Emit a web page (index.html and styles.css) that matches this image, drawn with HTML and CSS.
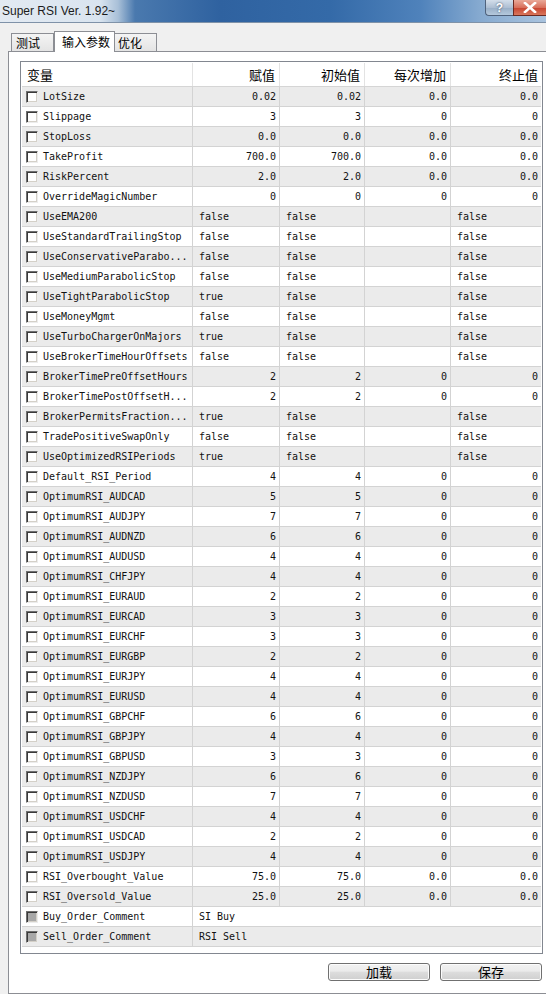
FILE: index.html
```html
<!DOCTYPE html>
<html>
<head>
<meta charset="utf-8">
<title>Super RSI Ver. 1.92~</title>
<link rel="stylesheet" href="styles.css">
</head>
<body>
<div class="titlebar">
  <div class="title">Super RSI Ver. 1.92~</div>
  <div class="ctrls">
    <div class="cbtn help">?</div>
    <div class="cbtn close"><svg width="14" height="11" viewBox="0 0 14 11"><path d="M2 1 L12 10 M12 1 L2 10" stroke="#fff" stroke-width="2.6" stroke-linecap="square"/></svg></div>
  </div>
</div>
<div class="client">
  <div class="tabs">
    <div class="tab t1">测试</div>
    <div class="tab t2 sel">输入参数</div>
    <div class="tab t3">优化</div>
  </div>
  <div class="page">
    <div class="list">
      <div class="hdr">
        <span class="hl">变量</span><span>赋值</span><span>初始值</span><span>每次增加</span><span class="last">终止值</span>
      </div>
      <div class="row alt"><span class="nm"><i class="cb"></i>LotSize</span><span class="n">0.02</span><span class="n">0.02</span><span class="n">0.0</span><span class="n">0.0</span></div>
      <div class="row"><span class="nm"><i class="cb"></i>Slippage</span><span class="n">3</span><span class="n">3</span><span class="n">0</span><span class="n">0</span></div>
      <div class="row alt"><span class="nm"><i class="cb"></i>StopLoss</span><span class="n">0.0</span><span class="n">0.0</span><span class="n">0.0</span><span class="n">0.0</span></div>
      <div class="row"><span class="nm"><i class="cb"></i>TakeProfit</span><span class="n">700.0</span><span class="n">700.0</span><span class="n">0.0</span><span class="n">0.0</span></div>
      <div class="row alt"><span class="nm"><i class="cb"></i>RiskPercent</span><span class="n">2.0</span><span class="n">2.0</span><span class="n">0.0</span><span class="n">0.0</span></div>
      <div class="row"><span class="nm"><i class="cb"></i>OverrideMagicNumber</span><span class="n">0</span><span class="n">0</span><span class="n">0</span><span class="n">0</span></div>
      <div class="row alt"><span class="nm"><i class="cb"></i>UseEMA200</span><span class="t">false</span><span class="t">false</span><span class="t"></span><span class="t">false</span></div>
      <div class="row"><span class="nm"><i class="cb"></i>UseStandardTrailingStop</span><span class="t">false</span><span class="t">false</span><span class="t"></span><span class="t">false</span></div>
      <div class="row alt"><span class="nm"><i class="cb"></i>UseConservativeParabo...</span><span class="t">false</span><span class="t">false</span><span class="t"></span><span class="t">false</span></div>
      <div class="row"><span class="nm"><i class="cb"></i>UseMediumParabolicStop</span><span class="t">false</span><span class="t">false</span><span class="t"></span><span class="t">false</span></div>
      <div class="row alt"><span class="nm"><i class="cb"></i>UseTightParabolicStop</span><span class="t">true</span><span class="t">false</span><span class="t"></span><span class="t">false</span></div>
      <div class="row"><span class="nm"><i class="cb"></i>UseMoneyMgmt</span><span class="t">false</span><span class="t">false</span><span class="t"></span><span class="t">false</span></div>
      <div class="row alt"><span class="nm"><i class="cb"></i>UseTurboChargerOnMajors</span><span class="t">true</span><span class="t">false</span><span class="t"></span><span class="t">false</span></div>
      <div class="row"><span class="nm"><i class="cb"></i>UseBrokerTimeHourOffsets</span><span class="t">false</span><span class="t">false</span><span class="t"></span><span class="t">false</span></div>
      <div class="row alt"><span class="nm"><i class="cb"></i>BrokerTimePreOffsetHours</span><span class="n">2</span><span class="n">2</span><span class="n">0</span><span class="n">0</span></div>
      <div class="row"><span class="nm"><i class="cb"></i>BrokerTimePostOffsetH...</span><span class="n">2</span><span class="n">2</span><span class="n">0</span><span class="n">0</span></div>
      <div class="row alt"><span class="nm"><i class="cb"></i>BrokerPermitsFraction...</span><span class="t">true</span><span class="t">false</span><span class="t"></span><span class="t">false</span></div>
      <div class="row"><span class="nm"><i class="cb"></i>TradePositiveSwapOnly</span><span class="t">false</span><span class="t">false</span><span class="t"></span><span class="t">false</span></div>
      <div class="row alt"><span class="nm"><i class="cb"></i>UseOptimizedRSIPeriods</span><span class="t">true</span><span class="t">false</span><span class="t"></span><span class="t">false</span></div>
      <div class="row"><span class="nm"><i class="cb"></i>Default_RSI_Period</span><span class="n">4</span><span class="n">4</span><span class="n">0</span><span class="n">0</span></div>
      <div class="row alt"><span class="nm"><i class="cb"></i>OptimumRSI_AUDCAD</span><span class="n">5</span><span class="n">5</span><span class="n">0</span><span class="n">0</span></div>
      <div class="row"><span class="nm"><i class="cb"></i>OptimumRSI_AUDJPY</span><span class="n">7</span><span class="n">7</span><span class="n">0</span><span class="n">0</span></div>
      <div class="row alt"><span class="nm"><i class="cb"></i>OptimumRSI_AUDNZD</span><span class="n">6</span><span class="n">6</span><span class="n">0</span><span class="n">0</span></div>
      <div class="row"><span class="nm"><i class="cb"></i>OptimumRSI_AUDUSD</span><span class="n">4</span><span class="n">4</span><span class="n">0</span><span class="n">0</span></div>
      <div class="row alt"><span class="nm"><i class="cb"></i>OptimumRSI_CHFJPY</span><span class="n">4</span><span class="n">4</span><span class="n">0</span><span class="n">0</span></div>
      <div class="row"><span class="nm"><i class="cb"></i>OptimumRSI_EURAUD</span><span class="n">2</span><span class="n">2</span><span class="n">0</span><span class="n">0</span></div>
      <div class="row alt"><span class="nm"><i class="cb"></i>OptimumRSI_EURCAD</span><span class="n">3</span><span class="n">3</span><span class="n">0</span><span class="n">0</span></div>
      <div class="row"><span class="nm"><i class="cb"></i>OptimumRSI_EURCHF</span><span class="n">3</span><span class="n">3</span><span class="n">0</span><span class="n">0</span></div>
      <div class="row alt"><span class="nm"><i class="cb"></i>OptimumRSI_EURGBP</span><span class="n">2</span><span class="n">2</span><span class="n">0</span><span class="n">0</span></div>
      <div class="row"><span class="nm"><i class="cb"></i>OptimumRSI_EURJPY</span><span class="n">4</span><span class="n">4</span><span class="n">0</span><span class="n">0</span></div>
      <div class="row alt"><span class="nm"><i class="cb"></i>OptimumRSI_EURUSD</span><span class="n">4</span><span class="n">4</span><span class="n">0</span><span class="n">0</span></div>
      <div class="row"><span class="nm"><i class="cb"></i>OptimumRSI_GBPCHF</span><span class="n">6</span><span class="n">6</span><span class="n">0</span><span class="n">0</span></div>
      <div class="row alt"><span class="nm"><i class="cb"></i>OptimumRSI_GBPJPY</span><span class="n">4</span><span class="n">4</span><span class="n">0</span><span class="n">0</span></div>
      <div class="row"><span class="nm"><i class="cb"></i>OptimumRSI_GBPUSD</span><span class="n">3</span><span class="n">3</span><span class="n">0</span><span class="n">0</span></div>
      <div class="row alt"><span class="nm"><i class="cb"></i>OptimumRSI_NZDJPY</span><span class="n">6</span><span class="n">6</span><span class="n">0</span><span class="n">0</span></div>
      <div class="row"><span class="nm"><i class="cb"></i>OptimumRSI_NZDUSD</span><span class="n">7</span><span class="n">7</span><span class="n">0</span><span class="n">0</span></div>
      <div class="row alt"><span class="nm"><i class="cb"></i>OptimumRSI_USDCHF</span><span class="n">4</span><span class="n">4</span><span class="n">0</span><span class="n">0</span></div>
      <div class="row"><span class="nm"><i class="cb"></i>OptimumRSI_USDCAD</span><span class="n">2</span><span class="n">2</span><span class="n">0</span><span class="n">0</span></div>
      <div class="row alt"><span class="nm"><i class="cb"></i>OptimumRSI_USDJPY</span><span class="n">4</span><span class="n">4</span><span class="n">0</span><span class="n">0</span></div>
      <div class="row"><span class="nm"><i class="cb"></i>RSI_Overbought_Value</span><span class="n">75.0</span><span class="n">75.0</span><span class="n">0.0</span><span class="n">0.0</span></div>
      <div class="row alt"><span class="nm"><i class="cb"></i>RSI_Oversold_Value</span><span class="n">25.0</span><span class="n">25.0</span><span class="n">0.0</span><span class="n">0.0</span></div>
      <div class="row"><span class="nm"><i class="cb off"></i>Buy_Order_Comment</span><span class="t wide">SI Buy</span></div>
      <div class="row alt"><span class="nm"><i class="cb off"></i>Sell_Order_Comment</span><span class="t wide">RSI Sell</span></div>
    </div>
    <div class="actions">
      <div class="btn">加载</div>
      <div class="btn">保存</div>
    </div>
  </div>
</div>
</body>
</html>
```

FILE: styles.css
```css
html, body {
  margin: 0;
  padding: 0;
}
body {
  width: 546px;
  height: 994px;
  overflow: hidden;
  background: #f0f0f0;
  font-family: "Noto Sans CJK SC", "Liberation Sans", sans-serif;
  color: #000;
}

/* title bar */
.titlebar {
  height: 23px;
  box-sizing: border-box;
  display: flex;
  align-items: flex-start;
  border-bottom: 1px solid #7f92a8;
  background: linear-gradient(to right, #e3eaf2 0, #d9e4ef 100px, #a9c0d8 118px, #4a79ae 135px, #2f62a0 220px, #346aa8 330px, #4f82bb 420px, #86aad0 480px, #a9c3de 546px);
}
.title {
  font: 12px "Liberation Sans", sans-serif;
  color: #1b1b1b;
  padding: 4px 0 0 2px;
  line-height: 14px;
}
.ctrls {
  margin-left: auto;
  display: flex;
}
.cbtn {
  height: 16px;
  box-sizing: border-box;
  display: flex;
  align-items: center;
  justify-content: center;
}
.help {
  width: 28px;
  border: 1px solid #4f627c;
  border-top: none;
  border-right: none;
  border-radius: 0 0 0 4px;
  background: linear-gradient(#d3deea, #aebfd3 50%, #98aec6 51%, #b4c8dc);
  color: #fff;
  font: bold 12px "Liberation Sans", sans-serif;
  text-shadow: 0 0 2px #2a3d55;
}
.close {
  width: 33px;
  border: 1px solid #6b2a22;
  border-top: none;
  border-right: none;
  background: linear-gradient(#e9a898, #d8705c 50%, #c7432f 51%, #d8765c);
}

/* client area */
.client {
  padding: 8px 0 0 8px;
}
.tabs {
  display: flex;
  align-items: flex-end;
  height: 20px;
  margin-left: 3px;
  position: relative;
  z-index: 2;
}
.tab {
  height: 18px;
  box-sizing: border-box;
  border: 1px solid #8c8e94;
  border-bottom: none;
  background: linear-gradient(#f4f4f4, #e4e4e4);
  font-size: 12px;
  line-height: 17px;
  padding-left: 4px;
  color: #000;
}
.t1 { width: 43px; }
.t2 { width: 61px; padding-left: 7px; }
.t3 { width: 42px; border-left: none; padding-left: 3px; }
.tab.sel {
  height: 21px;
  margin-bottom: -1px;
  background: #fff;
  line-height: 20px;
}

.page {
  height: 943px;
  box-sizing: border-box;
  border: 1px solid #8c8e94;
  border-right: none;
  background: #fff;
  padding: 9px 0 0 11px;
}

/* list view */
.list {
  width: 523px;
  height: 893px;
  box-sizing: border-box;
  border: 1px solid #828790;
  padding: 1px;
  background: #fff;
}
.hdr, .row {
  display: grid;
  grid-template-columns: 171px 87px 85px 86px 90px;
}
.hdr {
  height: 24px;
  box-sizing: border-box;
  border-bottom: 1px solid #d5d5d5;
  font-size: 13px;
  line-height: 23px;
}
.hdr span {
  text-align: right;
  padding-right: 4px;
  border-right: 1px solid #e3e3e3;
  white-space: nowrap;
}
.hdr .hl {
  text-align: left;
  padding-left: 5px;
}
.hdr .last { border-right: none; padding-right: 3px; }

.row {
  height: 20px;
  box-sizing: border-box;
  border-bottom: 1px solid #d3d3d3;
  font: 10px "DejaVu Sans Mono", "Liberation Mono", monospace;
  line-height: 20px;
  color: #111;
}
.row.alt {
  background: #ebebeb;
}
.row span {
  border-right: 1px solid #d3d3d3;
  white-space: nowrap;
  overflow: hidden;
  height: 19px;
}
.row span:last-child {
  border-right: none;
}
.nm {
  display: flex;
  align-items: center;
  padding-left: 4px;
}
.n {
  text-align: right;
  padding-right: 3px;
}
.t {
  padding-left: 6px;
}
.wide {
  grid-column: span 4;
}

.cb {
  width: 12px;
  height: 12px;
  box-sizing: border-box;
  margin-right: 5px;
  flex: none;
  background: #fff;
  border: 1px solid;
  border-color: #707070 #ececec #ececec #707070;
  box-shadow: inset 1px 1px 0 #3a3a3a, inset -1px -1px 0 #d4d0c8;
}
.cb.off {
  background: #a8a8a8;
}

/* buttons */
.actions {
  display: flex;
  justify-content: flex-end;
  gap: 10px;
  margin-top: 9px;
  padding-right: 4px;
}
.btn {
  width: 102px;
  height: 18px;
  box-sizing: border-box;
  border: 1px solid #707070;
  border-radius: 3px;
  background: linear-gradient(#f2f2f2, #ebebeb 45%, #dddddd 50%, #cfcfcf);
  box-shadow: inset 0 0 0 1px #fcfcfc;
  font-size: 13px;
  line-height: 16px;
  text-align: center;
  color: #000;
}
```
